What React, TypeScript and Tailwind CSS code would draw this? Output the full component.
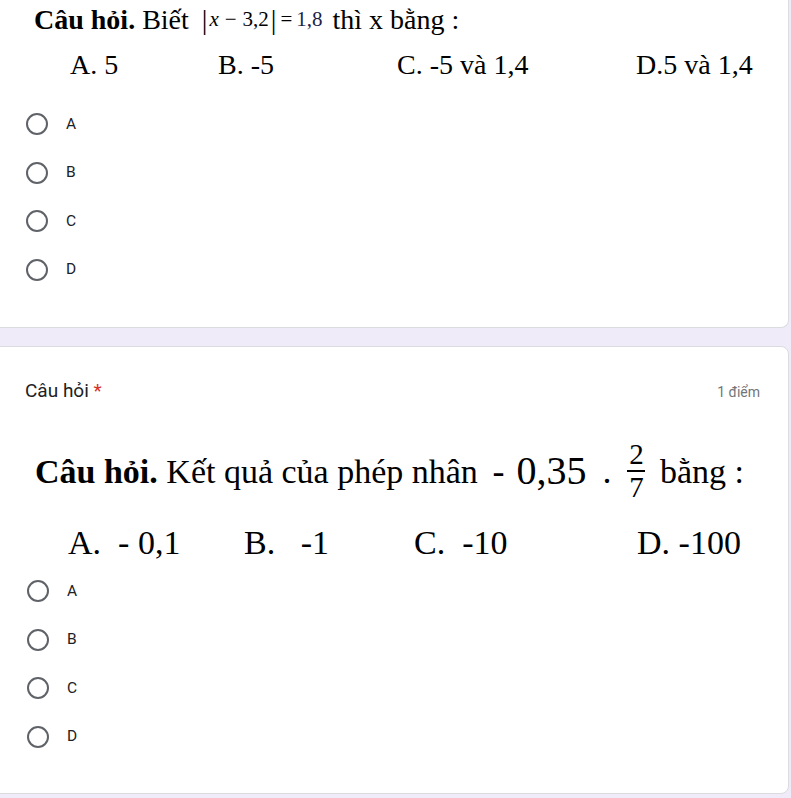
import React from "react";

function Radio({ label }: { label: string }) {
  return (
    <div className="flex h-[48.5px] items-center">
      <div className="ml-[26px] h-[22px] w-[22px] rounded-full border-2 border-[#5f6368]" />
      <span className="ml-[18px] text-[15.5px] text-[#202124]" style={{ fontFamily: "Roboto, 'Liberation Sans', sans-serif" }}>
        {label}
      </span>
    </div>
  );
}

function Frac({ n, d }: { n: string; d: string }) {
  return (
    <span className="ml-[16px] mr-[6px] inline-flex flex-col items-center align-middle leading-none">
      <span className="text-[29px] leading-[28px]">{n}</span>
      <span className="mt-[2px] h-[2px] w-[18px] bg-black" />
      <span className="text-[29px] leading-[30px]">{d}</span>
    </span>
  );
}

export default function App() {
  const serif = { fontFamily: "'Liberation Serif', 'Times New Roman', serif" };
  const sans = { fontFamily: "Roboto, 'Liberation Sans', sans-serif" };
  return (
    <div className="min-h-[798px] w-[791px] overflow-hidden bg-[#f0ebf8]">
      {/* Card 1 */}
      <div className="-ml-[10px] w-[799px] rounded-b-[8px] border-b border-r border-[#dadce0] bg-white pl-[10px]">
        <div className="h-[100px] text-black" style={serif}>
          <div className="flex h-[40px] items-center whitespace-pre pl-[34px] text-[28px]">
            <span className="font-bold">Câu hỏi.</span>
            <span> Biết </span>
            <span className="ml-[6px] mr-[10px] inline-flex items-center text-[21px]">
              <span className="text-[28px] leading-none">|</span>
              <span className="ml-[2px] italic">x</span>
              <span className="mx-[6px]">−</span>
              <span>3,2</span>
              <span className="ml-[2px] text-[28px] leading-none">|</span>
              <span className="mx-[4px]">=</span>
              <span className="text-[#1a1f4a]">1,8</span>
            </span>
            <span>thì x bằng :</span>
          </div>
          <div className="flex h-[50px] items-center whitespace-pre pl-[70px] text-[28px]">
            <span className="w-[148px]">A. 5</span>
            <span className="w-[179px]">B. -5</span>
            <span className="w-[239px]">C. -5 và 1,4</span>
            <span>D.5 và 1,4</span>
          </div>
        </div>
        <Radio label="A" />
        <Radio label="B" />
        <Radio label="C" />
        <Radio label="D" />
        <div className="h-[33px]" />
      </div>

      <div className="h-[18px]" />

      {/* Card 2 */}
      <div className="-ml-[10px] w-[799px] rounded-[8px] border border-[#dadce0] bg-white pl-[10px]">
        <div className="flex h-[56px] items-end justify-between pl-[24px] pr-[28px]" style={sans}>
          <span className="text-[19px] leading-[24px] text-[#202124]">
            Câu hỏi <span className="text-[#d93025]">*</span>
          </span>
          <span className="text-[14px] leading-[22px] text-[#70757a]">1 điểm</span>
        </div>
        <div className="h-[38px]" />
        <div className="text-black" style={serif}>
          <div className="flex h-[60px] items-center whitespace-pre pl-[34px] text-[34px]">
            <span className="font-bold">Câu hỏi.</span>
            <span> Kết quả của phép nhân </span>
            <span className="ml-[6px] text-[36px]">-</span>
            <span className="ml-[12px] text-[40px]">0,35</span>
            <span className="ml-[16px] text-[36px]">.</span>
            <Frac n="2" d="7" />
            <span> bằng :</span>
          </div>
          <div className="mt-[16px] flex h-[50px] items-center whitespace-pre pl-[67px] text-[34px]">
            <span className="w-[176px]">A.  - 0,1</span>
            <span className="w-[170px]">B.   -1</span>
            <span className="w-[223px]">C.  -10</span>
            <span>D. -100</span>
          </div>
        </div>
        <Radio label="A" />
        <Radio label="B" />
        <Radio label="C" />
        <Radio label="D" />
        <div className="h-[32px]" />
      </div>
    </div>
  );
}
